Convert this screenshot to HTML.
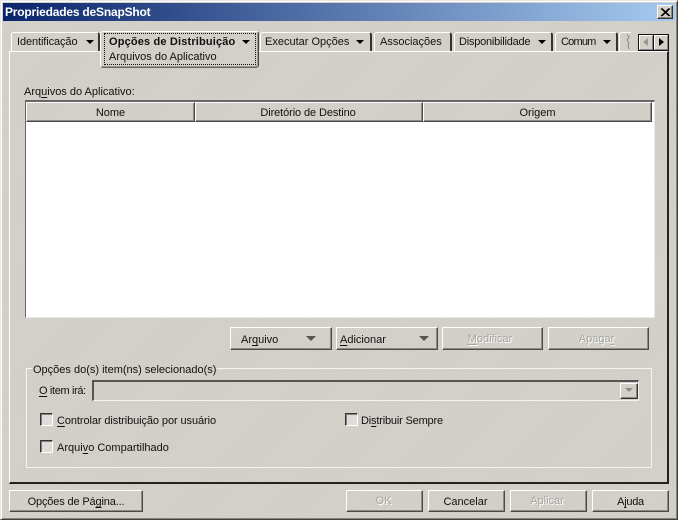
<!DOCTYPE html>
<html><head><meta charset="utf-8">
<style>
html,body{margin:0;padding:0}
body{width:678px;height:520px;overflow:hidden;position:relative;background:#d2d0c9;font:11px/13px "Liberation Sans",sans-serif;color:#111}
div,span.t{position:absolute;box-sizing:border-box}
.t{white-space:nowrap}
.bg{background-color:#d2d0c9;background-image:repeating-linear-gradient(135deg,#cdcbc4 0 1px,#d6d4cd 1px 2px)}
.btn{background:transparent;border:1px solid;border-color:#fff #4a4a4a #4a4a4a #fff;box-shadow:inset -1px -1px 0 #8c8b86;text-align:center;line-height:23px;height:23px}
.dis{color:#a6a5a0;text-shadow:1px 1px 0 #fff}
.tab{top:32px;height:19px;border-left:1px solid #fff;border-top:1px solid #fff;border-right:2px solid #333;border-radius:3px 3px 0 0;line-height:19px;padding-left:5px;white-space:nowrap}
.arr{width:0;height:0;border-left:4px solid transparent;border-right:4px solid transparent;border-top:4px solid #000}
.cb{width:13px;height:13px;border:1px solid;border-color:#333 #fff #fff #333;box-shadow:inset 1px 1px 0 #808080;background-color:#e0dfdb;background-image:repeating-linear-gradient(135deg,#cfceca 0 1px,#eeedea 1px 2px)}
u{text-decoration:underline;text-underline-offset:2px}
.hd{top:102px;height:20px;border:1px solid;border-color:#fff #4a4a4a #4a4a4a #fff;box-shadow:inset -1px -1px 0 #8c8b86;text-align:center;line-height:21px}
</style></head><body>
<div class="bg" style="left:0;top:0;width:678px;height:520px;border:1px solid;border-color:#e8e7e3 #404040 #404040 #e8e7e3;box-shadow:inset 1px 1px 0 #fff,inset -1px -1px 0 #85847f"></div>

<div style="left:3px;top:3px;width:672px;height:18px;background:linear-gradient(90deg,#0a246a,#a6caf0)"></div>
<span class="t" style="left:5px;top:6px;color:#fff;font-weight:bold;font-size:12px;letter-spacing:-.2px">Propriedades deSnapShot</span>
<div style="left:657px;top:5px;width:16px;height:14px;background:#d4d0c8;border:1px solid;border-color:#fff #333 #333 #fff;box-shadow:inset -1px -1px 0 #85847f">
<svg width="14" height="12" style="position:absolute;left:0;top:0"><path d="M3 2.5L11 10M4 2.5L12 10M11 2.5L3 10M12 2.5L4 10" stroke="#000" stroke-width="1" fill="none"/></svg></div>

<!-- panel -->
<div style="left:9px;top:51px;width:660px;height:433px;border:1px solid;border-color:#fff #222 #222 #fff;border-right-width:2px;border-bottom-width:2px"></div>

<!-- tabs -->
<div class="tab" style="left:11px;width:89px;letter-spacing:-.1px">Identificação<div class="arr" style="left:74px;top:7px"></div></div>
<div class="tab" style="left:260px;width:112px;padding-left:4px">Executar Opções<div class="arr" style="left:95px;top:7px"></div></div>
<div class="tab" style="left:374px;width:78px">Associações</div>
<div class="tab" style="left:454px;width:99px;padding-left:4px;letter-spacing:-.22px">Disponibilidade<div class="arr" style="left:83px;top:7px"></div></div>
<div class="tab" style="left:555px;width:63px;letter-spacing:-.8px">Comum<div class="arr" style="left:47px;top:7px"></div></div>
<div style="left:619px;top:32px;width:12px;height:19px;border-left:1px solid #fff;border-top:1px solid #fff;border-radius:3px 0 0 0"></div>
<svg style="position:absolute;left:624px;top:33px" width="8" height="18"><path d="M3 1.5L5 4L3 7L5 10L4 13L5 16" stroke="#888" fill="none"/></svg>

<!-- active tab -->
<div class="bg" style="left:100px;top:31px;width:159px;height:37px;border:1px solid;border-color:#fff #444 #666 #fff;border-radius:3px;box-shadow:inset -1px -1px 0 #9a9994"></div>
<div style="left:104px;top:33px;width:152px;height:32px;border:1px dotted #111"></div>
<span class="t" style="left:109px;top:36px;font-weight:bold;letter-spacing:.16px">Opções de Distribuição</span>
<div class="arr" style="left:242px;top:40px"></div>
<span class="t" style="left:109px;top:51px">Arquivos do Aplicativo</span>

<!-- tab scroll -->
<div style="left:638px;top:34px;width:31px;height:17px;border:1px solid #111;background:#d4d0c8"></div>
<div style="left:639px;top:35px;width:14px;height:15px;border:1px solid;border-color:#fff #888 #888 #fff"></div>
<div style="left:653px;top:34px;width:1px;height:17px;background:#111"></div>
<div style="left:654px;top:35px;width:14px;height:15px;border:1px solid;border-color:#fff #888 #888 #fff"></div>
<div style="left:643px;top:38px;width:0;height:0;border-top:4.5px solid transparent;border-bottom:4.5px solid transparent;border-right:5px solid #9a9994"></div>
<div style="left:659px;top:38px;width:0;height:0;border-top:4.5px solid transparent;border-bottom:4.5px solid transparent;border-left:5px solid #000"></div>

<!-- table -->
<span class="t" style="left:24px;top:86px">Arq<u>u</u>ivos do Aplicativo:</span>
<div style="left:25px;top:100px;width:630px;height:218px;background:#fff;border:1px solid;border-color:#666 #e8e8e4 #e8e8e4 #666;border-left-width:1px;border-top-width:2px"></div>
<div class="hd bg" style="left:26px;width:169px">Nome</div>
<div class="hd bg" style="left:195px;width:228px;letter-spacing:-.1px;padding-right:2px">Diretório de Destino</div>
<div class="hd bg" style="left:423px;width:229px">Origem</div>

<!-- action buttons -->
<div class="btn" style="left:230px;top:327px;width:102px;text-align:left;padding-left:10px;line-height:24px">Ar<u>q</u>uivo<div class="arr" style="left:75px;top:8px;border-left-width:5px;border-right-width:5px;border-top-width:5px;border-top-color:#555"></div></div>
<div class="btn" style="left:336px;top:327px;width:102px;text-align:left;padding-left:3px;line-height:24px"><u>A</u>dicionar<div class="arr" style="left:82px;top:8px;border-left-width:5px;border-right-width:5px;border-top-width:5px;border-top-color:#555"></div></div>
<div class="btn dis" style="left:442px;top:327px;width:101px;padding-right:5px"><u>M</u>odificar</div>
<div class="btn dis" style="left:548px;top:327px;width:101px;padding-right:4px">Apaga<u>r</u></div>

<!-- group -->
<div style="left:26px;top:368px;width:626px;height:100px;border:1px solid #f4f4f1"></div>
<span class="t bg" style="left:32px;top:364px;padding:0 1px;height:13px">Opções do(s) item(ns) selecionado(s)</span>
<span class="t" style="left:39px;top:385px;letter-spacing:-.35px"><u>O</u> item irá:</span>
<div style="left:92px;top:380px;width:547px;height:21px;border:1px solid;border-color:#555 #f4f4f1 #f4f4f1 #555;border-left-width:2px;border-top-width:2px"></div>
<div style="left:620px;top:383px;width:18px;height:16px;background:#d4d0c8;border:1px solid;border-color:#fff #333 #333 #fff;box-shadow:inset -1px -1px 0 #85847f"></div>
<div class="arr" style="left:625px;top:388px;border-top-color:#8c8b86"></div>

<div class="cb" style="left:40px;top:413px"></div>
<span class="t" style="left:57px;top:415px;letter-spacing:-.09px"><u>C</u>ontrolar distribuição por usuário</span>
<div class="cb" style="left:40px;top:440px"></div>
<span class="t" style="left:57px;top:442px">Arqui<u>v</u>o Compartilhado</span>
<div class="cb" style="left:345px;top:413px"></div>
<span class="t" style="left:361px;top:415px;letter-spacing:-.18px">Di<u>s</u>tribuir Sempre</span>

<!-- bottom buttons -->
<div class="btn" style="left:9px;top:490px;width:134px;height:22px;line-height:22px;letter-spacing:-.15px">Opções de Pá<u>g</u>ina...</div>
<div class="btn dis" style="left:346px;top:490px;width:77px;height:22px;line-height:20px;padding-right:2px">OK</div>
<div class="btn" style="left:428px;top:490px;width:77px;height:22px;line-height:22px;padding-right:2px">Cancelar</div>
<div class="btn dis" style="left:510px;top:490px;width:77px;height:22px;line-height:20px;padding-right:3px">Aplicar</div>
<div class="btn" style="left:592px;top:490px;width:77px;height:22px;line-height:22px;letter-spacing:-.3px">A<u>j</u>uda</div>
</body></html>
